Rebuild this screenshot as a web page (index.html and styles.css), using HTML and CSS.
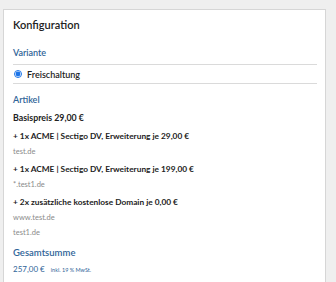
FILE: index.html
```html
<!DOCTYPE html>
<html lang="de">
<head>
    <meta charset="UTF-8">
    <meta name="viewport" content="width=device-width, initial-scale=1.0">
    <title>Konfiguration</title>
    <link rel="stylesheet" href="styles.css">
</head>
<body>
    <div class="panel">
        <h2 class="panel-title">Konfiguration</h2>

        <div class="section-title with-line">Variante</div>
        <label class="variant">
            <input type="radio" name="variant" checked>
            <span>Freischaltung</span>
        </label>

        <div class="section-title">Artikel</div>
        <div class="item base">Basispreis 29,00 €</div>
        <div class="item spaced">+ 1x ACME | Sectigo DV, Erweiterung je 29,00 €</div>
        <div class="domain">test.de</div>
        <div class="item spaced">+ 1x ACME | Sectigo DV, Erweiterung je 199,00 €</div>
        <div class="domain">*.test1.de</div>
        <div class="item spaced">+ 2x zusätzliche kostenlose Domain je 0,00 €</div>
        <div class="domain">www.test.de</div>
        <div class="domain">test1.de</div>

        <div class="section-title total-title">Gesamtsumme</div>
        <div class="total">257,00 € <small>inkl. 19 % MwSt.</small></div>
    </div>
</body>
</html>
```

FILE: styles.css
```css
body {
    margin: 0;
    padding: 9px 10px 0 3px;
    background-color: #efefef;
    font-family: Lato, "Open Sans", sans-serif;
    color: #222;
    height: 282px;
    box-sizing: border-box;
    overflow: hidden;
}
.panel {
    background-color: white;
    border: 1px solid #d6d6d6;
    padding: 7px 8px 0 9px;
    height: 300px;
}
.panel-title {
    font-size: 11px;
    line-height: 16px;
    font-weight: 600;
    margin: 0;
    color: #222;
}
.section-title {
    font-size: 9px;
    line-height: 16px;
    color: #2f6498;
    font-weight: 600;
    margin-top: 8px;
}
.with-line {
    margin-top: 12px;
    padding-bottom: 3px;
    border-bottom: 1px solid #dadada;
}
.variant {
    display: flex;
    align-items: center;
    gap: 5px;
    font-size: 9px;
    font-weight: 600;
    height: 18px;
    border-bottom: 1px solid #dadada;
}
.variant input {
    margin: 0 0 0 1px;
    width: 8px;
    height: 8px;
    accent-color: #1a73e8;
}
.item {
    font-size: 8.3px;
    line-height: 16px;
    font-weight: 700;
}
.base {
    font-size: 8.8px;
    margin-top: 2px;
}
.spaced {
    margin-top: 2px;
}
.domain {
    font-size: 7.5px;
    line-height: 15px;
    color: #8a8a8a;
}
.total-title {
    margin-top: 5px;
    font-size: 9.5px;
}
.total {
    font-size: 8px;
    line-height: 16px;
    color: #2f6498;
}
.total small {
    font-size: 5.5px;
    margin-left: 4px;
}
```
